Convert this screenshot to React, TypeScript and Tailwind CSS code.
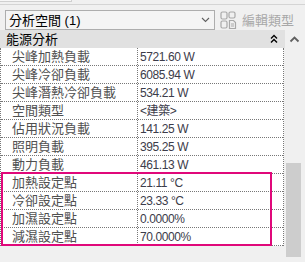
import React from "react";

type Row = { label: string; value: string };

const rows: Row[] = [
  { label: "尖峰加熱負載", value: "5721.60 W" },
  { label: "尖峰冷卻負載", value: "6085.94 W" },
  { label: "尖峰潛熱冷卻負載", value: "534.21 W" },
  { label: "空間類型", value: "<建築>" },
  { label: "佔用狀況負載", value: "141.25 W" },
  { label: "照明負載", value: "395.25 W" },
  { label: "動力負載", value: "461.13 W" },
  { label: "加熱設定點", value: "21.11 °C" },
  { label: "冷卻設定點", value: "23.33 °C" },
  { label: "加濕設定點", value: "0.0000%" },
  { label: "減濕設定點", value: "70.0000%" },
];

const font = { fontFamily: '"Liberation Sans", "Noto Sans CJK TC", sans-serif' };

const EditTypeIcon = () => (
  <svg width="17" height="18" viewBox="0 0 17 18" fill="none" stroke="#a8a8a8" strokeWidth="1.2">
    <rect x="1" y="1" width="6" height="7" rx="1.5" />
    <rect x="1" y="10" width="6" height="7" rx="1.5" />
    <rect x="9" y="1" width="6" height="6" rx="1.5" />
    <path d="M9.5 9.5h4l2 2v6h-6z" />
    <path d="M11 13h3M11 15h3" />
  </svg>
);

const App = () => {
  return (
    <div className="relative w-[305px] h-[262px] overflow-hidden bg-[#f0f0f0]" style={font}>
      {/* top strip */}
      <div className="h-[5px] border-b border-[#d4d4d4]">
        <div className="w-[72px] h-[2px] bg-[#f7f7f7] border-b border-r border-[#d0d0d0]" />
      </div>

      {/* type selector */}
      <div className="flex items-center h-[25px] pt-[5px]">
        <div className="ml-[5px] w-[210px] h-[20px] flex items-center justify-between border border-[#adadad] bg-[#f4f4f4] pl-[3px] pr-[4px]">
          <span className="text-[13px] text-black leading-none">分析空間 (1)</span>
          <svg width="9" height="6" viewBox="0 0 9 6" fill="none" stroke="#606060" strokeWidth="1.1">
            <path d="M1 1l3.5 3.5L8 1" />
          </svg>
        </div>
        <div className="ml-[5px] flex items-center gap-[5px]">
          <EditTypeIcon />
          <span className="text-[13px] text-[#a8a8a8] leading-none">編輯類型</span>
        </div>
      </div>

      <div className="flex">
        {/* grid */}
        <div className="w-[285px]">
          <div className="h-[18px] bg-[#e1e1e1] flex items-center justify-between pl-[6px] pr-[7px]">
            <span className="text-[13px] text-black leading-none">能源分析</span>
            <svg width="8" height="10" viewBox="0 0 8 10" fill="none" stroke="#000" strokeWidth="1.4">
              <path d="M1 4.5L4 1.5l3 3M1 8.5L4 5.5l3 3" />
            </svg>
          </div>
          <div className="bg-white w-[284px] border-l border-r border-dotted border-[#777]">
            {rows.map((r) => (
              <div key={r.label} className="flex h-[18px] border-b border-dotted border-[#777]">
                <div className="w-[137px] border-r border-dotted border-[#777] pl-[11px] flex items-center">
                  <span className="text-[13px] text-[#505050] leading-none">{r.label}</span>
                </div>
                <div className="pl-[2px] flex items-center">
                  <span className="text-[12px] text-[#3c3c4a] leading-none tracking-[-0.4px]">{r.value}</span>
                </div>
              </div>
            ))}
          </div>
        </div>

        {/* scrollbar */}
        <div className="relative w-[20px] h-[232px] bg-[#f0f0f0]">
          <svg className="absolute left-[4px] top-[6px]" width="11" height="7" viewBox="0 0 11 7" fill="none" stroke="#606060" strokeWidth="1.8">
            <path d="M1.5 5.5l4-4 4 4" />
          </svg>
          <div className="absolute left-[1px] top-[133px] w-[15px] h-[94px] bg-[#cdcdcd]" />
        </div>
      </div>

      {/* highlight */}
      <div className="absolute left-[1px] top-[172px] w-[271px] h-[74px] border-2 border-[#e0087a]" />
    </div>
  );
};

export default App;
